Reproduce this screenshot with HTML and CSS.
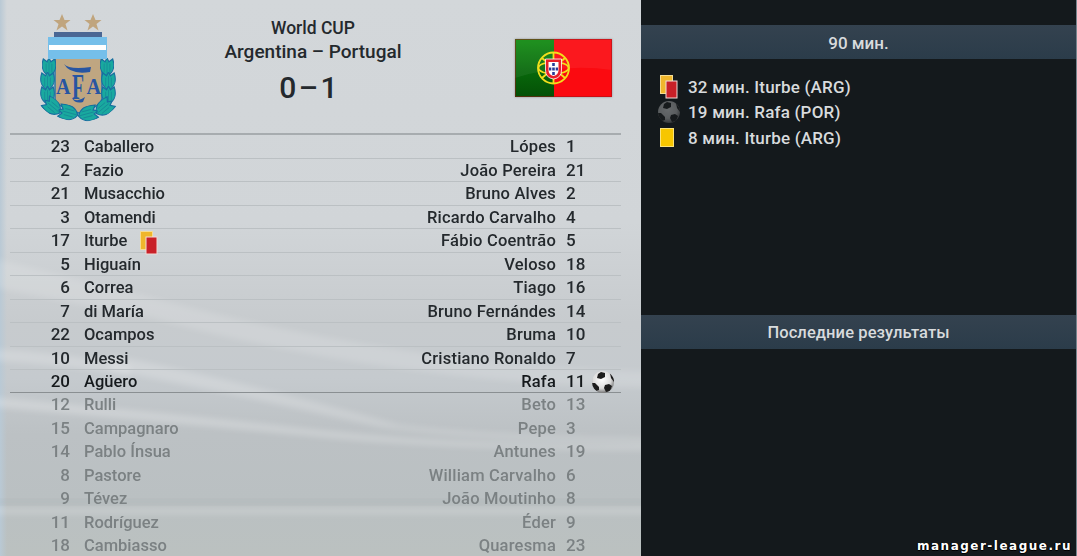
FILE: index.html
```html
<!DOCTYPE html>

<html lang="ru">

<head>
	<meta charset="utf-8">
	<title>Argentina – Portugal</title>
	<link rel="stylesheet" href="styles.css">
</head>


<body>
	<svg width="0" height="0" class="defs">
		<defs>
			<radialGradient id="shade" cx="45%" cy="38%" r="62%">
				<stop offset="0" stop-color="#fff"/>
				<stop offset=".65" stop-color="#dcdcdc"/>
				<stop offset="1" stop-color="#777"/>
			</radialGradient>
			<clipPath id="round"><circle cx="12" cy="12" r="11"/></clipPath>
			<symbol id="ball" viewBox="0 0 24 24">
				<circle cx="12" cy="12" r="11" fill="url(#shade)"/>
				<g clip-path="url(#round)" fill="#1c1c1c">
					<path d="M7 4l3-2 4 1 0 4-4 2-4-1z"/>
					<path d="M14 15l4-1 3 2-2 5-4 1-2-4z"/>
					<path d="M0 13l4 0 4 4 0 3-3 1-5-4z"/>
					<path d="M19 3l4 5v4l-3-4z"/>
				</g>
			</symbol>
			<symbol id="cards" viewBox="0 0 18 24">
				<rect x=".5" y=".5" width="12" height="18" fill="#efb62c" stroke="#f5dc93"/>
				<rect x="6" y="6" width="11" height="17" fill="#c92028" stroke="#f0dcd8"/>
			</symbol>
			<symbol id="leaf" viewBox="-7 -10 14 20">
				<path d="M0 9C-8 5-8-3-6-9L-2-6 0-10 2-6 6-9C8-3 8 5 0 9z" fill="#19a99f" stroke="#176f9f" stroke-width="1.2"/>
				<path d="M0 8V-6M-3 5V-4M3 5V-4" stroke="#167d93" stroke-width=".6" fill="none"/>
			</symbol>
		</defs>
	</svg>

	<div id="app">
		<div class="match">
			<!-- stadium light streaks -->
			<svg class="streaks" viewBox="0 0 641 556">
				<defs>
					<filter id="soft" x="-10%" y="-50%" width="120%" height="200%"><feGaussianBlur stdDeviation="3"/></filter>
				</defs>
				<g filter="url(#soft)" fill="#fff">
					<path d="M-20 255L150 297Q400 365 660 372V388Q400 385 150 318L-20 285z" opacity=".15"/>
					<path d="M-20 348Q60 352 130 366L130 376Q60 364 -20 360z" opacity=".2"/>
					<path d="M110 355Q230 378 400 425Q500 437 660 438L660 442Q480 442 380 427Q240 395 110 370z" opacity=".2"/>
					<path d="M-20 396Q160 412 320 430T660 444V450Q450 450 320 437T-20 406z" opacity=".24"/>
					<path d="M-20 508H660V514H-20z" opacity=".2"/>
				</g>
				<path d="M-20 500H660V504H-20z" fill="#8e999c" opacity=".15" filter="url(#soft)"/>
			</svg>

			<div class="head">
				<svg class="crest" viewBox="0 0 80 112">
					<g fill="#c0a57e">
						<path d="M24 4l2.500 6h6l-5 4 2 6.500-5.500-4-5.500 4 2-6.500-5-4h6z"/>
						<path d="M55 4l2.500 6h6l-5 4 2 6.500-5.500-4-5.500 4 2-6.500-5-4h6z"/>
					</g>
					<path d="M16 22H64V27H16z" fill="#4a6794"/>
					<path d="M17 46H64V89Q61 98 41 103Q20 98 17 89z" fill="#bfa681" stroke="#2874ab" stroke-width="1.5"/>
					<g>
						<use href="#leaf" x="4" y="48" width="14" height="19"/>
						<use href="#leaf" x="2" y="62" width="15" height="19"/>
						<use href="#leaf" x="2" y="76" width="15" height="19"/>
						<use href="#leaf" x="62" y="48" width="14" height="19"/>
						<use href="#leaf" x="63" y="62" width="15" height="19"/>
						<use href="#leaf" x="63" y="76" width="15" height="19"/>
						<use href="#leaf" x="-7" y="-10" width="15" height="21" transform="translate(14 97) rotate(-50)"/>
						<use href="#leaf" x="-7" y="-10" width="15" height="21" transform="translate(30 103) rotate(-75)"/>
						<use href="#leaf" x="-7" y="-10" width="15" height="21" transform="translate(66 97) rotate(50)"/>
						<use href="#leaf" x="-7" y="-10" width="15" height="21" transform="translate(50 103) rotate(75)"/>
					</g>
					<path d="M10 27H69V49H10z" fill="#75bfea"/>
					<path d="M11 35H68V40H11z" fill="#fff"/>
					<g class="crest-text">
						<text x="18" y="84" font-size="24" textLength="14.500" lengthAdjust="spacingAndGlyphs">A</text>
						<text x="34" y="89" font-size="36" textLength="12" lengthAdjust="spacingAndGlyphs">F</text>
						<text x="48.500" y="84" font-size="24" textLength="14.500" lengthAdjust="spacingAndGlyphs">A</text>
					</g>
					<path d="M26 54Q31 60 53 57L52 62Q32 65 26 54zM34 88Q39 93 47 87L45 92Q37 94 34 88z" fill="#2755a2"/>
				</svg>

				<div class="title">
					<div class="cup">World CUP</div>
					<div class="teams">Argentina – Portugal</div>
					<div class="score">0 – 1</div>
				</div>

				<svg class="flag" viewBox="0 0 97 58">
					<defs>
						<linearGradient id="green" x2="0" y2="1">
							<stop offset="0" stop-color="#128c12"/>
							<stop offset=".55" stop-color="#08680b"/>
							<stop offset="1" stop-color="#045006"/>
						</linearGradient>
					</defs>
					<path d="M0 0H39V58H0z" fill="url(#green)"/>
					<path d="M39 0H97V58H39z" fill="#fb0a10"/>
					<path d="M0 39Q48 24 97 31V0H0z" fill="#fff" opacity=".06"/>
					<g fill="none" stroke="#f2df1c" stroke-width="1.8">
						<circle cx="38.500" cy="29" r="15.500"/>
						<ellipse cx="38.500" cy="29" rx="15" ry="6"/>
						<path d="M27 19L50 39M27 39L50 19M38.500 13V45"/>
					</g>
					<path d="M30.500 20H46.500V31Q46.500 39 38.500 40Q30.500 39 30.500 31z" fill="#e8202a" stroke="#fff" stroke-width=".8"/>
					<path d="M33.500 23H43.500V31Q43.500 36 38.500 37Q33.500 36 33.500 31z" fill="#fff"/>
					<path d="M37.200 24h2.600v3h-2.600zM37.200 28.500h2.600v3h-2.600zM37.200 33h2.600v3h-2.600zM34 28.500h2.300v3h-2.300zM40.700 28.500h2.300v3h-2.300z" fill="#2a3b98"/>
					<path d="M.5 .5H96.500V57.500H.5z" fill="none" stroke="#9e1216" opacity=".5"/>
				</svg>
			</div>

			<div class="squads">
				<div class="row"><b>23</b><span>Caballero</span><span class="away">Lópes</span><b>1</b></div>
				<div class="row"><b>2</b><span>Fazio</span><span class="away">João Pereira</span><b>21</b></div>
				<div class="row"><b>21</b><span>Musacchio</span><span class="away">Bruno Alves</span><b>2</b></div>
				<div class="row"><b>3</b><span>Otamendi</span><span class="away">Ricardo Carvalho</span><b>4</b></div>
				<div class="row"><b>17</b><span>Iturbe<svg class="cards"><use href="#cards"/></svg></span><span class="away">Fábio Coentrão</span><b>5</b></div>
				<div class="row"><b>5</b><span>Higuaín</span><span class="away">Veloso</span><b>18</b></div>
				<div class="row"><b>6</b><span>Correa</span><span class="away">Tiago</span><b>16</b></div>
				<div class="row"><b>7</b><span>di María</span><span class="away">Bruno Fernándes</span><b>14</b></div>
				<div class="row"><b>22</b><span>Ocampos</span><span class="away">Bruma</span><b>10</b></div>
				<div class="row"><b>10</b><span>Messi</span><span class="away">Cristiano Ronaldo</span><b>7</b></div>
				<div class="row last"><b>20</b><span>Agüero</span><span class="away">Rafa</span><b>11</b><svg class="ball"><use href="#ball"/></svg></div>

				<div class="row sub"><b>12</b><span>Rulli</span><span class="away">Beto</span><b>13</b></div>
				<div class="row sub"><b>15</b><span>Campagnaro</span><span class="away">Pepe</span><b>3</b></div>
				<div class="row sub"><b>14</b><span>Pablo Ínsua</span><span class="away">Antunes</span><b>19</b></div>
				<div class="row sub"><b>8</b><span>Pastore</span><span class="away">William Carvalho</span><b>6</b></div>
				<div class="row sub"><b>9</b><span>Tévez</span><span class="away">João Moutinho</span><b>8</b></div>
				<div class="row sub"><b>11</b><span>Rodríguez</span><span class="away">Éder</span><b>9</b></div>
				<div class="row sub"><b>18</b><span>Cambiasso</span><span class="away">Quaresma</span><b>23</b></div>
			</div>
		</div>

		<div class="side">
			<div class="bar minute">90 мин.</div>
			<div class="events">
				<div class="event"><svg class="cards"><use href="#cards"/></svg><span>32 мин. Iturbe (ARG)</span></div>
				<div class="event"><svg class="ball dim"><use href="#ball"/></svg><span>19 мин. Rafa (POR)</span></div>
				<div class="event"><i class="yellow"></i><span>8 мин. Iturbe (ARG)</span></div>
			</div>
			<div class="bar results">Последние результаты</div>
			<div class="site">manager-league.ru</div>
		</div>
	</div>
</body>

</html>
```
FILE: styles.css
```css
body {
	margin: 0;
	background-color: #14191c;
	font-family: Roboto, "Liberation Sans", sans-serif;
	font-weight: 500;
}

.defs {
	display: block;
}

#app {
	display: flex;
	width: 1077px;
	height: 556px;
	overflow: hidden;
}

.match {
	position: relative;
	box-sizing: border-box;
	width: 641px;
	height: 556px;
	overflow: hidden;
	background: linear-gradient(90deg, #b9c9d5 0, rgba(200, 208, 212, 0) 7px), linear-gradient(#d3d7da 0, #d1d5d8 40%, #c7cbce 58%, #c5cace 68%, #bcc1c4 78%, #bac0c2 90%, #bbc1c0 100%);
	color: #24292d;
}

.streaks {
	position: absolute;
	left: 0;
	top: 0;
	width: 641px;
	height: 556px;
}

.head {
	position: relative;
	display: flex;
	align-items: flex-start;
	height: 133px;
	padding-left: 38px;
}

.crest {
	width: 80px;
	height: 112px;
	margin-top: 10px;
}

.crest-text {
	font-family: "Liberation Serif", serif;
	font-weight: bold;
	fill: #2755a2;
}

.title {
	width: 390px;
	text-align: center;
	padding-top: 18px;
}

.cup {
	font-size: 17.500px;
	line-height: 20px;
}

.teams {
	font-size: 19px;
	line-height: 24px;
	margin-top: 2px;
}

.score {
	margin: 6px 9px 0 0;
	font-size: 30px;
	line-height: 36px;
	word-spacing: -5px;
}

.flag {
	width: 97px;
	height: 58px;
	margin: 39px 0 0 7px;
	box-shadow: 0 0 2px #8b9091;
}

.squads {
	position: relative;
	margin: 0 20px 0 10px;
	padding-top: .3px;
	border-top: 2px solid #a7acaf;
}

.row {
	display: grid;
	grid-template-columns: 60px 200px 286px 35px 1fr;
	box-sizing: border-box;
	height: 23.47px;
	border-bottom: 1px solid #bbc0c3;
	font-size: 16.500px;
	line-height: 23px;
	white-space: nowrap;
}

.row b {
	font-weight: 500;
	text-align: right;
	font-size: 17px;
}

.row span {
	padding-left: 14px;
}

.row .away {
	text-align: right;
	letter-spacing: .2px;
}

.row .away + b {
	text-align: left;
	padding-left: 10px;
}

.row.last {
	border-bottom-color: #8a8f92;
	color: #15191c;
}

.row.sub {
	border-bottom-color: transparent;
	color: #7b8183;
}

.cards {
	width: 18px;
	height: 24px;
}

.row .cards {
	margin: 0 0 -9px 13px;
	vertical-align: baseline;
}

.ball {
	width: 24px;
	height: 24px;
}

.side {
	box-sizing: border-box;
	display: flex;
	flex-direction: column;
	width: 436px;
	height: 556px;
	padding-top: 25px;
	background-color: #14191c;
	border-right: 1px solid #76858e;
	color: #d8dbdd;
	font-size: 17px;
}

.bar {
	height: 34px;
	line-height: 37px;
	background: linear-gradient(#34424f, #2b3c4a);
	text-align: center;
}

.events {
	height: 241px;
	padding: 15px 0 0 16px;
	box-sizing: border-box;
	letter-spacing: .2px;
}

.event {
	display: grid;
	grid-template-columns: 31px 1fr;
	align-items: center;
	height: 25.500px;
}

.event .cards {
	margin-left: 3px;
}

.dim {
	opacity: .35;
}

.yellow {
	width: 12px;
	height: 17px;
	margin-left: 3px;
	background-color: #f7c600;
	border: 1px solid #fbe27a;
}

.results {
	margin-top: 15px;
	line-height: 35px;
	font-size: 16.500px;
	letter-spacing: .1px;
}

.site {
	margin: auto 4px 2px auto;
	color: #fff;
	font: bold 12px/15px "DejaVu Sans", sans-serif;
	letter-spacing: 1.500px;
	text-shadow: 1px 0 #000, -1px 0 #000, 0 1px #000;
}
```
